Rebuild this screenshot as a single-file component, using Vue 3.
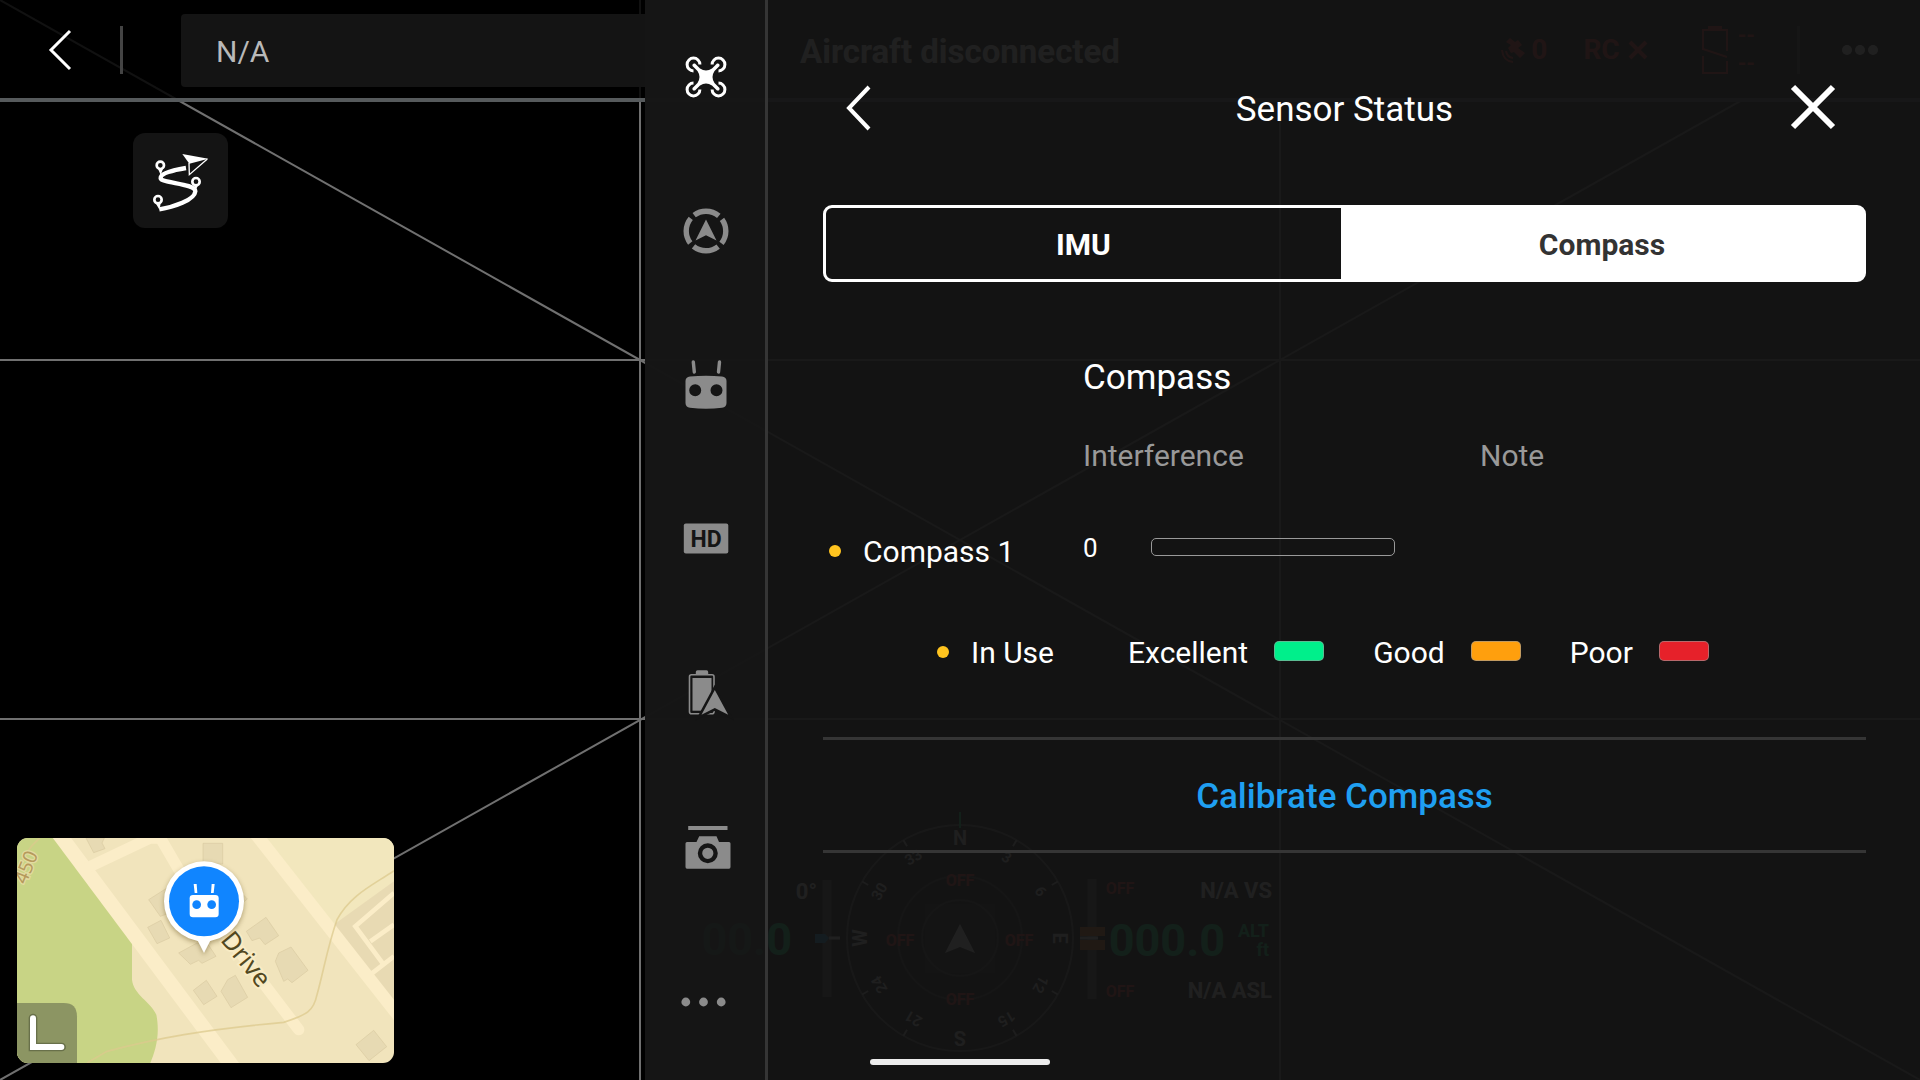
<script setup>
import { ref } from 'vue'

const activeSection = ref('aircraft')
const activeTab = ref('compass')

const sections = [
  { id: 'aircraft', label: 'Aircraft' },
  { id: 'attitude', label: 'Flight control' },
  { id: 'sensing', label: 'Remote controller' },
  { id: 'hd', label: 'Image transmission' },
  { id: 'battery', label: 'Battery' },
  { id: 'camera', label: 'Camera' },
  { id: 'more', label: 'More' },
]

const tabs = [
  { id: 'imu', label: 'IMU' },
  { id: 'compass', label: 'Compass' },
]

const compasses = [{ name: 'Compass 1', value: 0, note: '' }]

const levels = [
  { label: 'Excellent', tone: 'excellent' },
  { label: 'Good', tone: 'good' },
  { label: 'Poor', tone: 'poor' },
]

const bearings = ['N', '3', '6', 'E', '12', '15', 'S', '21', '24', 'W', '30', '33']
</script>

<template>
  <div class="screen">
    <svg class="grid-lines" viewBox="0 0 1920 1080" preserveAspectRatio="none" aria-hidden="true">
      <path d="M0 360H1920M0 719H1920M640 0V1080M1280 0V1080" />
      <path d="M0 0L1920 1080M1920 0L0 1080" />
    </svg>

    <section class="cockpit">
      <header class="topbar">
        <button class="icon-button exit" aria-label="Exit">
          <svg width="24" height="42" viewBox="0 0 24 42"><path d="M22 2L3 21L22 40" /></svg>
        </button>
        <span class="rule"></span>
        <div class="flight-mode">N/A</div>
        <div class="notice">Aircraft disconnected</div>
        <div class="signals">
          <svg width="24" height="26" viewBox="0 0 24 26">
            <path class="fill" d="M9 1L14 5L17 3L21 8L17 11L24 16L19 21L13 15L10 16L7 11L10 8L5 5Z" />
            <path class="thin" d="M5 14Q6 20 12 21M1 13Q2 24 12 25" />
          </svg>
          <span class="sat-count">0</span>
          <span class="rc">RC</span>
          <svg class="rc-off" width="20" height="20" viewBox="0 0 20 20"><path class="bold" d="M2 2L18 18M18 2L2 18" /></svg>
          <svg width="26" height="48" viewBox="0 0 26 48">
            <path class="fill" d="M6 0H20V4H6Z" />
            <path class="thin" d="M1 24V4H25V25M1 23L25 31M1 30V47H25V35" />
          </svg>
          <span class="cells"><span>--</span><span>--</span></span>
        </div>
        <span class="rule menu-rule"></span>
        <svg class="topbar-more" width="36" height="10" viewBox="0 0 36 10">
          <circle cx="5" cy="5" r="5" /><circle cx="18" cy="5" r="5" /><circle cx="31" cy="5" r="5" />
        </svg>
      </header>

      <button class="route" aria-label="Flight route">
        <svg viewBox="0 0 285 285" width="95" height="95">
          <g transform="translate(-39 -39)">
            <path class="track" d="M198 144C160 150 120 160 122 175C126 190 226 190 226 214C224 240 160 262 118 268" />
            <g class="pin">
              <circle cx="121" cy="136" r="11" /><path d="M114 146L122 165L129 146Z" />
              <circle cx="228" cy="185" r="11" /><path d="M222 195L225 214L235 195Z" />
              <circle cx="114" cy="239" r="11" /><path d="M106 248L119 270L122 248Z" />
            </g>
            <path class="plane-fill" d="M187 102L265 116L208 131Z" />
            <path class="plane-line" d="M207 129L208 164L262 117" />
          </g>
        </svg>
      </button>

      <div class="mini-map">
        <svg viewBox="0 0 1131 675" preserveAspectRatio="xMidYMid slice">
          <rect width="1131" height="675" fill="#f1e4bc" />
          <path d="M730 0H1131V480Z" fill="#f2e7bd" />
          <path d="M0 0H115L345 315V425C350 470 400 490 418 530C430 590 415 640 400 675H0Z" fill="#c8d485" />
          <path d="M950 260L1131 130V500L1060 410Z" fill="#e8dab3" />
          <g fill="none" stroke="#fbedc8">
            <path d="M120 -20L650 690" stroke-width="44" />
            <path d="M210 90L400 0H430L500 120L845 575" stroke-width="34" stroke-linecap="round" stroke-linejoin="round" />
            <path d="M710 -20L1150 540" stroke-width="38" />
            <path d="M1131 165L1015 265L1100 380M1060 310L1131 260M1060 410L1131 355" stroke-width="14" />
          </g>
          <g fill="none" stroke="#dcca8d" stroke-width="5" opacity=".75">
            <path d="M210 675L270 640C420 600 560 575 800 553C870 530 890 520 900 470C920 400 930 330 960 245C1000 170 1070 140 1131 98" />
            <path d="M0 110Q20 40 68 0" />
          </g>
          <g fill="#e7dab3" stroke="#d9caa2" stroke-width="2">
            <path d="M207 0L230 44L264 32L255 15L262 0Z" />
            <path d="M558 16H617V78H558Z" />
            <path d="M395 185L450 150L500 210L430 235Z" />
            <path d="M392 268L432 247L458 300L420 317Z" />
            <path d="M640 130L691 183L670 200Z" />
            <path d="M688 280L747 238L785 293L744 320L728 300L705 308Z" />
            <path d="M775 370L785 345L822 327L873 397L825 434L812 423L800 430Z" />
            <path d="M485 345L540 315L575 322L597 355L555 376L545 367L520 379L512 371Z" />
            <path d="M529 457L568 427L600 475L560 500Z" />
            <path d="M612 460L632 425L655 412L692 478L642 509Z" />
            <path d="M1017 620L1070 577L1109 626L1056 668Z" />
          </g>
          <text class="contour" transform="translate(27 141) rotate(-68)">450</text>
          <text class="street" transform="translate(608 307) rotate(51)">Drive</text>
          <path d="M0 495H140Q180 495 180 535V675H0Z" fill="#8c9563" />
          <path d="M48 540V627H134" fill="none" stroke="#68704a" stroke-width="26" stroke-linecap="round" />
          <path d="M48 541V627H133" fill="none" stroke="#fff" stroke-width="18" stroke-linecap="round" />
          <g class="marker">
            <circle cx="561" cy="190" r="120" fill="#fff" />
            <path d="M538 300L561 345L584 300Z" fill="#fff" />
          </g>
          <circle cx="561" cy="190" r="105" fill="#1085ff" />
          <g fill="#fff">
            <rect x="518" y="171" width="87" height="67" rx="10" />
            <path d="M530 138H539L541 165H533ZM584 138H593L590 165H582Z" />
          </g>
          <circle cx="539" cy="200" r="13" fill="#1085ff" />
          <circle cx="584" cy="200" r="13" fill="#1085ff" />
        </svg>
      </div>

      <svg class="hud" width="660" height="300" viewBox="630 780 660 300" aria-hidden="true">
        <circle class="dial" cx="960" cy="938" r="113" />
        <g class="dial inner">
          <circle cx="960" cy="938" r="62" />
          <circle cx="960" cy="938" r="38" />
        </g>
        <circle class="disc" cx="960" cy="938" r="88" />
        <rect class="disc" x="925" y="904" width="70" height="69" />
        <path class="green-line" d="M960 812V828" />
        <g v-for="(b, i) in bearings" :key="b" :transform="`rotate(${i * 30} 960 938)`">
          <path v-if="i % 3" class="tick" d="M960 825V832" />
          <text class="bearing" :class="{ cardinal: i % 3 === 0 }" x="960" :y="i % 3 ? 850 : 845">{{ b }}</text>
        </g>
        <path class="heading" d="M960 924L975 953L960 947L945 953Z" />
        <g class="off">
          <text x="960" y="886">OFF</text>
          <text x="960" y="1005">OFF</text>
          <text x="900" y="946">OFF</text>
          <text x="1019" y="946">OFF</text>
          <text x="1120" y="894">OFF</text>
          <text x="1120" y="997">OFF</text>
        </g>
        <path class="gauge" d="M827 880V997M1092 879V999" />
        <path class="blue" d="M815 934H825L829 938L825 943H815Z" />
        <path class="white-line" d="M829 938H840M1080 938H1098" />
        <path class="amber" d="M1080 927H1105V936H1080ZM1080 940H1105V950H1080Z" />
        <g class="end">
          <text class="small" x="817" y="899">0°</text>
          <text class="small" x="1272" y="898">N/A VS</text>
          <text class="small" x="1272" y="998">N/A ASL</text>
          <text class="big" x="792" y="955">00.0</text>
          <text class="big" x="1225" y="956">000.0</text>
          <text class="unit" x="1269" y="937">ALT</text>
          <text class="unit" x="1269" y="956">ft</text>
        </g>
      </svg>
    </section>

    <aside class="drawer">
      <nav class="sidebar">
        <button
          v-for="s in sections"
          :key="s.id"
          class="section"
          :class="{ active: s.id === activeSection }"
          :aria-label="s.label"
          @click="activeSection = s.id"
        >
          <svg width="48" height="48" viewBox="0 0 48 48">
            <template v-if="s.id === 'aircraft'">
              <path class="ring" d="M11.5 17.9A6.4 6.4 0 1 1 17.9 11.5M30.1 11.5A6.4 6.4 0 1 1 36.5 17.9M36.5 30.1A6.4 6.4 0 1 1 30.1 36.5M17.9 36.5A6.4 6.4 0 1 1 11.5 30.1" />
              <path d="M13 10.5L18 15.5Q24 19.500 30 15.500L35 10.500Q38 10 37.500 13L32.500 18Q28.500 24 32.500 30L37.500 35Q38 38 35 37.500L30 32.500Q24 28.500 18 32.500L13 37.500Q10 38 10.500 35L15.500 30Q19.500 24 15.500 18L10.500 13Q10 10 13 10.500Z" />
            </template>
            <template v-else-if="s.id === 'attitude'">
              <circle class="segments" cx="24" cy="24" r="19.8" />
              <path d="M24 12.500L34.500 33.500L24 28.200L13.500 33.500Z" />
            </template>
            <template v-else-if="s.id === 'sensing'">
              <path fill-rule="evenodd" d="M8 15.500Q24 14 40 15.500Q44.500 16 44.500 20V42Q44.500 46 40 46.700Q24 49 8 46.700Q3.500 46 3.500 42V20Q3.500 16 8 15.500ZM13.200 23.300A6 6 0 1 0 13.200 35.300A6 6 0 1 0 13.200 23.300ZM34.500 23.300A6 6 0 1 0 34.500 35.300A6 6 0 1 0 34.500 23.300Z" />
              <path class="antenna" d="M11.300 1L12.300 11M37.500 1L36.500 11" />
            </template>
            <template v-else-if="s.id === 'hd'">
              <rect x="1.8" y="8.500" width="44.500" height="30" rx="2" />
              <text class="hd" x="24" y="32">HD</text>
            </template>
            <template v-else-if="s.id === 'battery'">
              <path d="M13.800 5V3Q13.800 1.300 15.500 1.300H24.500Q26.200 1.300 26.200 3V5Z" />
              <rect class="case" x="7.500" y="5.800" width="24.500" height="39" rx="2" />
              <rect x="10.500" y="9" width="19" height="32.700" />
              <path class="cutout" d="M32.800 21L46.200 45.700L32.800 39L19.500 45.700Z" />
              <path d="M32.800 21L46.200 45.700L32.800 39L19.500 45.700Z" />
            </template>
            <template v-else-if="s.id === 'camera'">
              <rect x="6.200" y="3" width="39.300" height="4" />
              <path d="M5 19H14.500L17.200 13.300H34.500L37 19H47Q48.500 19 48.500 20.500V44Q48.500 45.700 47 45.700H5Q3.500 45.700 3.500 44V20.500Q3.500 19 5 19Z" />
              <circle class="lens" cx="25.800" cy="30.300" r="7.800" />
            </template>
            <template v-else>
              <circle cx="3.800" cy="25" r="4.400" /><circle cx="21.500" cy="25" r="4.400" /><circle cx="39.200" cy="25" r="4.400" />
            </template>
          </svg>
        </button>
      </nav>

      <main class="panel">
        <header class="panel-head">
          <button class="icon-button" aria-label="Back">
            <svg width="26" height="48" viewBox="0 0 26 48"><path d="M23 3L3 24L23 45" /></svg>
          </button>
          <h1>Sensor Status</h1>
          <button class="icon-button close" aria-label="Close">
            <svg width="46" height="46" viewBox="0 0 46 46"><path d="M3 3L43 43M43 3L3 43" /></svg>
          </button>
        </header>

        <div class="tabs" role="tablist">
          <button
            v-for="t in tabs"
            :key="t.id"
            role="tab"
            class="tab"
            :class="{ selected: t.id === activeTab }"
            :aria-selected="t.id === activeTab"
            @click="activeTab = t.id"
          >{{ t.label }}</button>
        </div>

        <h2 id="compass-title">Compass</h2>
        <table aria-labelledby="compass-title">
          <thead>
            <tr>
              <td class="name-col"></td>
              <th scope="col" class="value-col">Interference</th>
              <th scope="col">Note</th>
            </tr>
          </thead>
          <tbody>
            <tr v-for="c in compasses" :key="c.name">
              <th scope="row"><span class="name"><i class="dot"></i>{{ c.name }}</span></th>
              <td>
                <span class="reading">
                  <span class="number">{{ c.value }}</span>
                  <span class="meter"><span class="meter-fill" :style="{ width: c.value + '%' }"></span></span>
                </span>
              </td>
              <td>{{ c.note }}</td>
            </tr>
          </tbody>
        </table>

        <ul class="legend">
          <li class="in-use"><i class="dot"></i>In Use</li>
          <li v-for="l in levels" :key="l.tone">{{ l.label }}<i class="swatch" :class="l.tone"></i></li>
        </ul>

        <button class="calibrate">Calibrate Compass</button>
      </main>
    </aside>

    <div class="home-bar"></div>
  </div>
</template>

<style>
body {
  margin: 0;
  background: #000;
}
</style>

<style scoped>
.screen {
  position: relative;
  min-height: 100vh;
  overflow: hidden;
  background: #000;
  color: #fff;
  font-family: Roboto, "Liberation Sans", sans-serif;
  font-size: 30px;
  line-height: 36px;
}

button {
  margin: 0;
  padding: 0;
  border: 0;
  background: none;
  color: inherit;
  font: inherit;
  cursor: pointer;
}

svg {
  display: block;
  overflow: visible;
}

.grid-lines {
  position: absolute;
  inset: 0;
  width: 100%;
  height: 100%;
  fill: none;
  stroke: #707070;
  stroke-width: 2;
}

.cockpit {
  position: relative;
  display: flex;
  flex-direction: column;
  align-items: flex-start;
  min-height: 100vh;
  box-sizing: border-box;
}

.topbar {
  display: flex;
  align-items: center;
  align-self: stretch;
  height: 102px;
  box-sizing: border-box;
  padding: 2px 42px 0 48px;
  border-bottom: 4px solid #565a5c;
  background: rgba(0, 0, 0, 0.85);
}

.icon-button svg {
  fill: none;
  stroke: #fff;
  stroke-width: 4;
}

.exit svg {
  stroke-width: 3;
}

.rule {
  width: 3px;
  height: 48px;
  margin-left: 48px;
  background: #444;
}

.menu-rule {
  margin-left: 42px;
}

.flight-mode {
  width: 540px;
  height: 73px;
  box-sizing: border-box;
  margin-left: 58px;
  padding: 1px 35px;
  border-radius: 4px;
  background: #141414;
  color: #b9b9b9;
  line-height: 73px;
}

.notice {
  flex: 1;
  margin-left: 79px;
  padding-top: 3px;
  font-size: 33px;
  font-weight: 700;
}

.signals {
  display: flex;
  align-items: center;
  color: #ff3428;
  font-size: 28px;
  font-weight: 700;
}

.signals svg {
  fill: none;
  stroke: #ff3428;
}

.signals .fill {
  fill: #ff3428;
  stroke: none;
}

.signals .thin {
  stroke-width: 2;
}

.signals .bold {
  stroke-width: 4;
}

.sat-count {
  margin: 0 36px 0 6px;
}

.rc-off {
  margin: 0 54px 0 8px;
}

.cells {
  display: flex;
  flex-direction: column;
  gap: 6px;
  margin-left: 10px;
  font-size: 22px;
  line-height: 22px;
}

.topbar-more {
  margin-left: 42px;
  fill: #fff;
}

.route {
  margin: 31px 0 0 133px;
  border-radius: 12px;
  background: #141414;
}

.track {
  fill: none;
  stroke: #fff;
  stroke-width: 13;
}

.pin circle {
  fill: none;
  stroke: #fff;
  stroke-width: 8;
}

.pin path,
.plane-fill {
  fill: #fff;
}

.plane-line {
  fill: none;
  stroke: #fff;
  stroke-width: 4;
}

.mini-map {
  width: 377px;
  height: 225px;
  margin: auto 0 17px 17px;
  overflow: hidden;
  border-radius: 11px;
}

.mini-map svg {
  width: 100%;
  height: 100%;
}

.street {
  font-family: "Noto Sans", sans-serif;
  font-size: 76px;
  fill: #52481f;
  stroke: #f8ebc4;
  stroke-width: 12;
  paint-order: stroke;
}

.contour {
  font-family: "Noto Sans", sans-serif;
  font-size: 58px;
  fill: #b69a5c;
  stroke: #e2dba0;
  stroke-width: 8;
  paint-order: stroke;
}

.marker {
  filter: drop-shadow(0 6px 8px rgba(90, 70, 20, 0.45));
}

.hud {
  position: absolute;
  bottom: 0;
  left: 50%;
  transform: translateX(-50%);
  font-weight: 700;
}

.dial,
.tick,
.green-line,
.gauge,
.white-line {
  fill: none;
  stroke: #666;
  stroke-width: 2;
}

.inner {
  stroke: #2c2c2c;
}

.tick {
  stroke: #bbb;
}

.disc {
  fill: #fff;
  opacity: 0.06;
}

.green-line {
  stroke: #00f090;
}

.white-line {
  stroke: #fff;
  stroke-width: 3;
}

.gauge {
  stroke: #555;
  stroke-width: 9;
}

.bearing {
  font-size: 15px;
  fill: #ddd;
  text-anchor: middle;
}

.cardinal {
  font-size: 20px;
}

.heading {
  fill: #fff;
}

.off {
  font-size: 16px;
  fill: #ff3428;
  text-anchor: middle;
}

.blue {
  fill: #20b0ff;
}

.amber {
  fill: #ff7a20;
}

.end {
  text-anchor: end;
}

.small {
  font-size: 22px;
  fill: #fff;
}

.big {
  font-size: 45px;
  fill: #00f090;
}

.unit {
  font-size: 18px;
  fill: #00f090;
}

.drawer {
  position: absolute;
  top: 0;
  right: 0;
  bottom: 0;
  display: flex;
  width: calc(60% + 123px);
}

.sidebar {
  display: flex;
  flex-direction: column;
  width: 120px;
  padding-bottom: 2px;
  border-right: 3px solid #353535;
  background: rgba(21, 21, 21, 0.99);
}

.section {
  --ink: #8b8b8b;
  display: flex;
  flex: 1;
  align-items: center;
  justify-content: center;
  padding-left: 1px;
}

.section.active {
  --ink: #fff;
}

.section svg {
  fill: var(--ink);
}

.ring,
.segments,
.case,
.antenna {
  fill: none;
  stroke: var(--ink);
}

.ring {
  stroke-width: 3;
}

.segments {
  stroke-width: 5.4;
  stroke-dasharray: 26.5 4.6;
  stroke-dashoffset: 13.25;
}

.case {
  stroke-width: 1.6;
}

.antenna {
  stroke-width: 3.4;
  stroke-linecap: round;
}

.cutout {
  fill: #151515;
  stroke: #151515;
  stroke-width: 5;
}

.lens {
  stroke: #151515;
  stroke-width: 4.4;
}

.hd {
  font-size: 23px;
  font-weight: 700;
  fill: #151515;
  text-anchor: middle;
}

.panel {
  flex: 1;
  padding: 78px 54px 0 55px;
  background: rgba(20, 20, 20, 0.95);
}

.panel-head {
  display: grid;
  grid-template-columns: 1fr auto 1fr;
  align-items: center;
  height: 60px;
  margin-bottom: 67px;
  padding: 0 23px;
}

.panel-head .icon-button {
  justify-self: start;
}

.panel-head .close {
  justify-self: end;
  margin: 0 7px 2px 0;
}

.close svg {
  stroke-width: 6;
}

h1,
h2 {
  margin: 0;
  font-size: 35px;
  font-weight: 400;
  line-height: 42px;
}

h1 {
  padding-top: 4px;
}

.tabs {
  display: grid;
  grid-template-columns: 515fr 522fr;
  height: 77px;
  box-sizing: border-box;
  border: 3px solid #fff;
  border-radius: 9px;
}

.tab {
  padding-top: 2px;
  font-weight: 700;
}

.tab.selected {
  background: #fff;
  color: #333;
}

h2 {
  margin: 75px 0 35px;
  padding-left: 260px;
}

table {
  width: 100%;
  table-layout: fixed;
  border-collapse: collapse;
  text-align: left;
}

th,
td {
  padding: 0;
  font-weight: 400;
}

thead tr {
  height: 44px;
  color: #999;
}

tbody tr {
  height: 146px;
}

.name-col {
  width: 260px;
}

.value-col {
  width: 397px;
}

.name {
  display: flex;
  align-items: center;
  gap: 22px;
  padding: 2px 0 0 6px;
}

.dot {
  width: 12px;
  height: 12px;
  margin-bottom: 2px;
  border-radius: 50%;
  background: #ffc41f;
}

.reading {
  display: flex;
  align-items: center;
  padding-bottom: 6px;
}

.number {
  width: 68px;
  font-size: 26px;
}

.meter {
  width: 244px;
  height: 18px;
  box-sizing: border-box;
  margin-bottom: 2px;
  overflow: hidden;
  border: 1px solid #999;
  border-radius: 5px;
}

.meter-fill {
  display: block;
  height: 100%;
  background: #00ef8b;
}

.legend {
  display: flex;
  align-items: center;
  gap: 49px;
  margin: 11px 0 66px;
  padding: 0 0 0 114px;
  list-style: none;
}

.legend li {
  display: flex;
  align-items: center;
  gap: 26px;
}

.legend .in-use {
  gap: 22px;
  margin-right: 25px;
}

.swatch {
  width: 50px;
  height: 20px;
  box-sizing: border-box;
  margin-bottom: 4px;
  border: 1px solid rgba(153, 153, 153, 0.6);
  border-radius: 5px;
}

.excellent {
  background-color: #00ef8b;
}

.good {
  background-color: #ff9f0d;
}

.poor {
  background-color: #e6212a;
}

.calibrate {
  display: block;
  width: 100%;
  height: 116px;
  box-sizing: border-box;
  padding-top: 4px;
  border: solid #353535;
  border-width: 3px 0;
  color: #1f9ff1;
  font-size: 35px;
  font-weight: 500;
  line-height: 42px;
}

.home-bar {
  position: absolute;
  bottom: 15px;
  left: 50%;
  width: 180px;
  height: 6px;
  margin-left: -90px;
  border-radius: 3px;
  background: #ececec;
}
</style>
